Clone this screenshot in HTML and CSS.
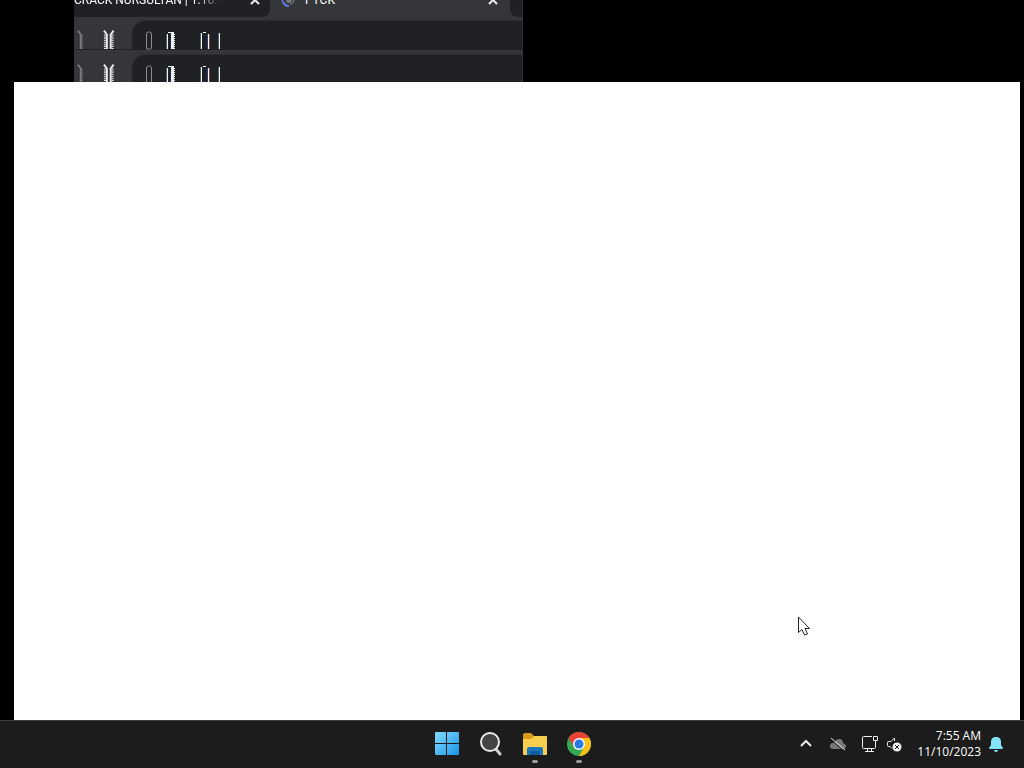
FILE: index.html
```html
<!DOCTYPE html>
<html lang="en">

<head>
    <meta charset="utf-8">
    <title>Desktop</title>
    <link rel="stylesheet" href="styles.css">
</head>

<body>
    <!-- Shared by both smeared rows -->
    <svg class="symbols" width="0" height="0">
        <symbol id="nav-marks" viewBox="0 0 58 30">
            <path d="M3 11l3 4v15" fill="none" stroke="#77787b" stroke-width="2"/>
            <path d="M7 15v15" fill="none" stroke="#77787b" stroke-width="2" stroke-dasharray="1 1"/>
            <path d="M30 11l3 4v15M40 11l-3 4v15" fill="none" stroke="#e9e9e9" stroke-width="2"/>
            <path d="M31 15v15M39 15v15" fill="none" stroke="#e9e9e9" stroke-width="2" stroke-dasharray="1 1"/>
        </symbol>
        <symbol id="address-marks" viewBox="0 0 96 30">
            <path d="M14.500 29V14q0-2 2-2h1q2 0 2 2v14q0 1-1 1h-3z" fill="none" stroke="#8a8b8e"/>
            <g shape-rendering="crispEdges">
                <path d="M35 14h1v15h-1zM36 12h2v1h-2z" fill="#f2f2f2"/>
                <path d="M34 14h1v15h-1z" fill="#446462"/>
                <path d="M38 12h4v2h-3zM39 14h3v15h-3z" fill="#eee"/>
                <path d="M38.500 14v15" stroke="#27306e" stroke-dasharray="1 1"/>
                <path d="M42.500 14v15" stroke="#eee" stroke-dasharray="1 1"/>
                <path d="M69 13h1v16h-1zM76 14h1v15h-1zM87 13h1v16h-1zM71 12h3v1h-3z" fill="#f4f4f4"/>
                <path d="M68 13h1v16h-1zM86 13h1v16h-1z" fill="#446462"/>
                <path d="M75 14h1v15h-1z" fill="#2c3a70"/>
                <path d="M77 14h1v15h-1z" fill="#70504a"/>
            </g>
        </symbol>
    </svg>

    <main class="desktop">
        <!-- Browser left behind the blank window -->
        <section class="browser">
            <div class="tabs">
                <div class="tab">
                    <span class="tab-title">CRACK NURSULTAN | 1.16.5</span>
                    <button class="tab-close" aria-label="Close tab">
                        <svg viewBox="0 0 10 10"><path d="M1 1l8 8M9 1l-8 8"/></svg>
                    </button>
                </div>
                <div class="tab tab-active">
                    <svg class="spinner" viewBox="0 0 14 14">
                        <circle cx="8" cy="7" r="3" fill="#74777e"/>
                        <path d="M2 3C0 8 3 13 8 13" fill="none" stroke="#5877d8" stroke-width="2"/>
                        <path d="M9 11c3 0 4-2 4-5" fill="none" stroke="#7d8794"/>
                    </svg>
                    <span class="tab-title">PTCK</span>
                    <button class="tab-close" aria-label="Close tab">
                        <svg viewBox="0 0 10 10"><path d="M1 1l8 8M9 1l-8 8"/></svg>
                    </button>
                </div>
                <div class="tab tab-next"></div>
            </div>
            <div class="smear">
                <svg class="nav-marks"><use href="#nav-marks"/></svg>
                <div class="address">
                    <svg class="address-marks"><use href="#address-marks"/></svg>
                </div>
            </div>
            <div class="smear">
                <svg class="nav-marks"><use href="#nav-marks"/></svg>
                <div class="address">
                    <svg class="address-marks"><use href="#address-marks"/></svg>
                </div>
            </div>
        </section>
        <section class="window"></section>
    </main>

    <footer class="taskbar">
        <nav class="apps">
            <button class="app" aria-label="Start">
                <svg viewBox="0 0 24 24">
                    <defs>
                        <linearGradient id="win" x1="0" y1="0" x2="24" y2="24" gradientUnits="userSpaceOnUse">
                            <stop offset="0" stop-color="#84dcff"/>
                            <stop offset="1" stop-color="#1593e5"/>
                        </linearGradient>
                    </defs>
                    <path d="M1 0h10v11H0V1q0-1 1-1zM12 0h11q1 0 1 1v10H12zM0 12h11v11H1q-1 0-1-1zM12 12h12v10q0 1-1 1H12z" fill="url(#win)"/>
                </svg>
            </button>
            <button class="app" aria-label="Search">
                <svg viewBox="0 0 24 24">
                    <path d="M16 16l5 6" stroke="#d0d0d0" stroke-width="3" stroke-linecap="round"/>
                    <circle cx="11" cy="10" r="9" fill="#444" stroke="#e9e9e9" stroke-width="2"/>
                </svg>
            </button>
            <button class="app app-open" aria-label="File Explorer">
                <svg viewBox="0 0 24 24">
                    <path d="M0 3q0-2 2-2h6l3 3-3 4H0z" fill="#d99b16"/>
                    <path d="M0 7h8l3-3h12q1 0 1 1v17q0 1-1 1H1q-1 0-1-1z" fill="#f8ce4e"/>
                    <path d="M4 23v-6q0-2 2-2h12q2 0 2 2v6z" fill="#1976bd"/>
                    <path d="M7 19h10v4H7z" fill="#105d9d"/>
                </svg>
            </button>
            <button class="app app-open" aria-label="Google Chrome">
                <svg viewBox="0 0 24 24">
                    <circle cx="12" cy="12" r="12" fill="#34a853"/>
                    <path d="M1.600 6A12 12 0 0 1 22.400 6H12L6.800 15z" fill="#ea4335"/>
                    <path d="M22.400 6A12 12 0 0 1 12 24l5.200-9L12 6z" fill="#fbc116"/>
                    <circle cx="12" cy="12" r="6" fill="#fff"/>
                    <circle cx="12" cy="12" r="4.500" fill="#2879e8"/>
                </svg>
            </button>
        </nav>

        <div class="tray">
            <button class="tray-icon" aria-label="Show hidden icons">
                <svg viewBox="0 0 16 16"><path d="M3 10l5-5 5 5" fill="none" stroke="#eee" stroke-width="2"/></svg>
            </button>
            <button class="tray-icon" aria-label="OneDrive">
                <svg viewBox="0 0 16 16">
                    <path d="M3 13a3 3 0 0 1 0-6q1-1 2-1 1-3 4-3 4 0 4 4 3 1 3 3 0 3-3 3z" fill="#77787a"/>
                    <path d="M0 3l14 12" stroke="#202020"/>
                    <path d="M1 2l14 12" stroke="#e4e4e4"/>
                </svg>
            </button>
            <button class="tray-icon quick-settings" aria-label="Network and sound">
                <svg viewBox="0 0 16 16" fill="none" stroke="#eee">
                    <path d="M10 .500H1.500q-1 0-1 1v10q0 1 1 1h11q1 0 1-1V8M5.500 13v2.500M9.500 13v2.500M3 15.500h9M11.500.500h4v4h-4zM13.500 5v3"/>
                </svg>
                <svg viewBox="0 0 16 16">
                    <path d="M8.500 5V2L5 5.500H2.500q-1 0-1 1v3q0 1 1 1H4l2 2" fill="none" stroke="#eee"/>
                    <circle cx="11" cy="11" r="4.500" fill="#eee"/>
                    <path d="M9 9l4 4M13 9l-4 4" stroke="#202020"/>
                </svg>
            </button>
            <button class="clock">
                <span>7:55 AM</span>
                <span>11/10/2023</span>
            </button>
            <button class="tray-icon" aria-label="Notifications">
                <svg viewBox="0 0 16 16">
                    <path d="M1 12l2-3V6q0-5 5-5t5 5v3l2 3q0 1-1 1H2q-1 0-1-1z" fill="#84e4f7"/>
                    <path d="M6 14h4q0 2-2 2t-2-2z" fill="#84e4f7"/>
                </svg>
            </button>
        </div>
    </footer>

    <svg class="cursor" viewBox="0 0 12 20">
        <path d="M.500 1v15.500l3.500-3 2.500 5.500 3-1-2.500-5.500h4.500z" fill="#fff" stroke="#222"/>
    </svg>
</body>

</html>
```
FILE: styles.css
```css
* {
    box-sizing: border-box;
}

body {
    display: flex;
    flex-direction: column;
    min-height: 100vh;
    margin: 0;
    background-color: #000;
    color: #fff;
    font-family: "Open Sans", "Noto Sans", sans-serif;
    font-size: 12px;
    overflow: hidden;
}

button {
    padding: 0;
    border: none;
    background: none;
    color: inherit;
    font: inherit;
}

svg {
    display: block;
}

.desktop {
    flex: 1;
    display: flex;
    flex-direction: column;
    padding: 0 4px 0 14px;
}

/* Browser */
.browser {
    width: 100%;
    max-width: 449px;
    height: 82px;
    margin-left: 60px;
    overflow: hidden;
    border-right: 1px solid #303134;
    background-color: #35363a;
}

/* the upper half of the tabs is off screen */
.tabs {
    display: flex;
    height: 40px;
    margin-top: -20px;
}

.tab {
    display: flex;
    align-items: center;
    flex: 0 0 196px;
    min-width: 0;
    height: 37px;
    padding: 3px 10px 0 0;
    border-radius: 0 0 8px 0;
    background-color: #202124;
}

.tab-active {
    flex: 1;
    gap: 10px;
    padding: 3px 12px 0 11px;
    background-color: #35363a;
}

.tab-next {
    flex: 0 0 12px;
    padding: 0;
    border-radius: 0 0 0 8px;
}

.tab-title {
    flex: 1;
    min-width: 0;
    overflow: hidden;
    font-family: Roboto, sans-serif;
    white-space: nowrap;
}

.tab:first-child .tab-title {
    margin-right: 30px;
    -webkit-mask-image: linear-gradient(to right, #000 85%, transparent);
    mask-image: linear-gradient(to right, #000 85%, transparent);
}

.tab-close svg {
    width: 10px;
    height: 10px;
    fill: none;
    stroke: #eee;
    stroke-width: 2;
}

.spinner {
    width: 14px;
    height: 14px;
}

.smear {
    display: flex;
    height: 34px;
    border-bottom: 4px solid #35363a;
}

.nav-marks {
    flex: none;
    width: 58px;
    height: 30px;
    border-bottom: 1px solid #202124;
}

.address {
    flex: 1;
    height: 30px;
    border-top: 1px solid #2b2c2f;
    border-radius: 14px 0 0 0;
    background-color: #202124;
}

.address-marks {
    width: 96px;
    height: 30px;
    margin-top: -1px;
}

/* Blank window */
.window {
    flex: 1;
    background-color: #fff;
}

/* Taskbar */
.taskbar {
    display: grid;
    grid-template-columns: 1fr auto 1fr;
    height: 48px;
    padding-left: 2px;
    border-top: 1px solid #3c3c3c;
    background-color: #1c1c1c;
}

.apps {
    grid-column: 2;
    display: flex;
}

.app {
    display: flex;
    flex-direction: column;
    align-items: center;
    width: 44px;
    padding-top: 11px;
}

.app svg {
    width: 24px;
    height: 24px;
}

.app-open::after {
    content: "";
    width: 6px;
    height: 3px;
    margin-top: 4px;
    border-radius: 2px;
    background-color: #999;
}

.tray {
    display: flex;
    align-items: center;
    justify-content: flex-end;
    gap: 16px;
    padding: 0 20px 2px 0;
}

.tray-icon svg {
    width: 16px;
    height: 16px;
}

.quick-settings {
    display: flex;
    gap: 8px;
}

.clock {
    display: flex;
    flex-direction: column;
    margin: 0 -9px 0 -1px;
    line-height: 16px;
    text-align: right;
}

.cursor {
    position: absolute;
    top: 616px;
    left: 798px;
    width: 12px;
    height: 20px;
}
```
